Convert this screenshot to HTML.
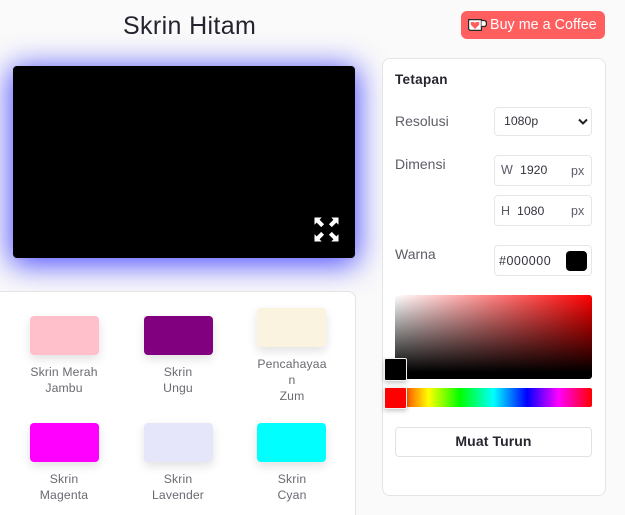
<!DOCTYPE html>
<html lang="ms">
<head>
<meta charset="utf-8">
<title>Skrin Hitam</title>
<style>
html,body{margin:0;padding:0;width:625px;height:515px;overflow:hidden;background:#fafafa;}
body{font-family:"Liberation Sans",sans-serif;color:#2b2b3a;}
#w{position:absolute;left:0;top:0;width:625px;height:515px;overflow:hidden;background:#fafafa;}
.a{position:absolute;box-sizing:border-box;white-space:nowrap;}
.screen{left:13px;top:66px;width:342px;height:192px;background:#000;border-radius:4px;box-shadow:0 4px 30px 3px #5050ff;}
.card{background:#fff;border:1px solid #e4e4e4;border-radius:8px;}
.sw{width:69px;height:39px;border-radius:4px;box-shadow:0 4px 10px rgba(0,0,0,.12);}
.lb{width:90px;text-align:center;font-size:12.2px;line-height:16px;color:#6a6a72;letter-spacing:.15px;}
.lab{left:395px;font-size:14px;color:#5d5d68;letter-spacing:0;line-height:16px;}
.box{background:#fff;border:1px solid #e6e6e6;border-radius:4px;left:494px;width:98px;}
.t{font-size:12.3px;line-height:14px;color:#33333f;letter-spacing:0;}
.u{font-size:12.5px;line-height:14px;color:#5a5a66;}
.thumb{left:384px;width:23px;height:23px;border:1px solid #f0f0f0;border-radius:2px;box-shadow:0 2px 5px rgba(0,0,0,.22);}
</style>
</head>
<body>
<div id="w">
<div class="a" style="left:123px;top:12px;font-size:25px;line-height:28px;letter-spacing:.36px;color:#24242f;">Skrin Hitam</div>

<div class="a" style="left:461px;top:11px;width:144px;height:28px;background:#ff5f5f;border-radius:6px;"></div>
<svg class="a" style="left:468px;top:19px" width="19" height="12" viewBox="0 0 19 12">
<path d="M.6.600h12.800v10.800H2L.6 10z" fill="#fff" stroke="#2a2a2a" stroke-width="1.200"/>
<path d="M13.500 1.500h3.500l1.400 1.400v3.200L17 7.500h-3.500" fill="#fff" stroke="#2a2a2a" stroke-width="1.300"/>
<path d="M7 10L2.800 5.800V3h3L7 4l1.200-1h3v2.800z" fill="#ff5f5f"/>
</svg>
<div class="a" style="left:490px;top:17px;font-size:14.3px;line-height:16px;color:#fff;letter-spacing:.03px;">Buy me a Coffee</div>

<div class="a screen"></div>
<svg class="a" style="left:314px;top:217px" width="25" height="25" viewBox="0 0 26 26" fill="#fff">
<path d="M.5.500H8L5.800 2.800l4.700 4.700-3 3-4.700-4.700L.5 8z"/>
<path d="M25.500.500H18l2.200 2.300-4.700 4.700 3 3 4.700-4.700L25.500 8z"/>
<path d="M.5 25.500H8l-2.200-2.300 4.700-4.700-3-3-4.700 4.700L.5 18z"/>
<path d="M25.500 25.500H18l2.200-2.300-4.700-4.700 3-3 4.700 4.700 2.300-2.200z"/>
</svg>

<div class="a card" style="left:-12px;top:291px;width:368px;height:240px;"></div>

<div class="a sw" style="left:30px;top:316px;background:#ffc0cb;"></div>
<div class="a sw" style="left:144px;top:316px;background:#800080;"></div>
<div class="a sw" style="left:257px;top:308px;background:#faf3e0;"></div>
<div class="a sw" style="left:30px;top:423px;background:#ff00ff;"></div>
<div class="a sw" style="left:144px;top:423px;background:#e6e6fa;"></div>
<div class="a sw" style="left:257px;top:423px;background:#00ffff;"></div>

<div class="a lb" style="left:19px;top:364px;">Skrin Merah<br>Jambu</div>
<div class="a lb" style="left:133px;top:364px;">Skrin<br>Ungu</div>
<div class="a lb" style="left:247px;top:356px;">Pencahayaa<br>n<br>Zum</div>
<div class="a lb" style="left:19px;top:471px;">Skrin<br>Magenta</div>
<div class="a lb" style="left:133px;top:471px;">Skrin<br>Lavender</div>
<div class="a lb" style="left:247px;top:471px;">Skrin<br>Cyan</div>

<div class="a card" style="left:382px;top:58px;width:224px;height:438px;"></div>
<div class="a" style="left:395px;top:72px;font-size:13.5px;line-height:16px;font-weight:700;color:#26262f;letter-spacing:.3px;">Tetapan</div>

<div class="a lab" style="top:113px;">Resolusi</div>
<div class="a box" style="top:107px;height:29px;"></div>
<div class="a t" style="left:504px;top:114px;">1080p</div>
<svg class="a" style="left:578px;top:118px" width="10" height="8" viewBox="0 0 10 8"><path d="M1 1.500l4 4 4-4" fill="none" stroke="#222" stroke-width="2"/></svg>

<div class="a lab" style="top:156px;">Dimensi</div>
<div class="a box" style="top:155px;height:31px;"></div>
<div class="a u" style="left:501px;top:163px;">W</div>
<div class="a t" style="left:520px;top:163px;">1920</div>
<div class="a u" style="left:571px;top:164px;">px</div>
<div class="a box" style="top:195px;height:31px;"></div>
<div class="a u" style="left:501px;top:204px;">H</div>
<div class="a t" style="left:517px;top:204px;">1080</div>
<div class="a u" style="left:571px;top:204px;">px</div>

<div class="a lab" style="top:246px;">Warna</div>
<div class="a box" style="top:245px;height:31px;"></div>
<div class="a t" style="left:499px;top:254px;font-size:12.5px;letter-spacing:.5px;">#000000</div>
<div class="a" style="left:566px;top:251px;width:21px;height:20px;background:#000;border-radius:4px;"></div>

<div class="a" style="left:395px;top:295px;width:197px;height:84px;border-radius:3px;background:linear-gradient(to top,#000 0%,#000 8%,rgba(0,0,0,0) 100%),linear-gradient(to right,#fff,#f00);"></div>
<div class="a thumb" style="top:358px;background:#000;"></div>
<div class="a" style="left:395px;top:388px;width:197px;height:19px;border-radius:2px;background:linear-gradient(to right,#f00 0%,#ff0 17%,#0f0 33%,#0ff 50%,#00f 67%,#f0f 83%,#f00 100%);"></div>
<div class="a thumb" style="top:387px;height:22px;background:#f00;"></div>

<div class="a" style="left:395px;top:427px;width:197px;height:30px;background:#fff;border:1px solid #e2e2e2;border-radius:4px;"></div>
<div class="a" style="left:395px;top:433px;width:197px;text-align:center;font-size:14px;line-height:16px;font-weight:700;color:#26262f;letter-spacing:.1px;">Muat Turun</div>
</div>
</body>
</html>
